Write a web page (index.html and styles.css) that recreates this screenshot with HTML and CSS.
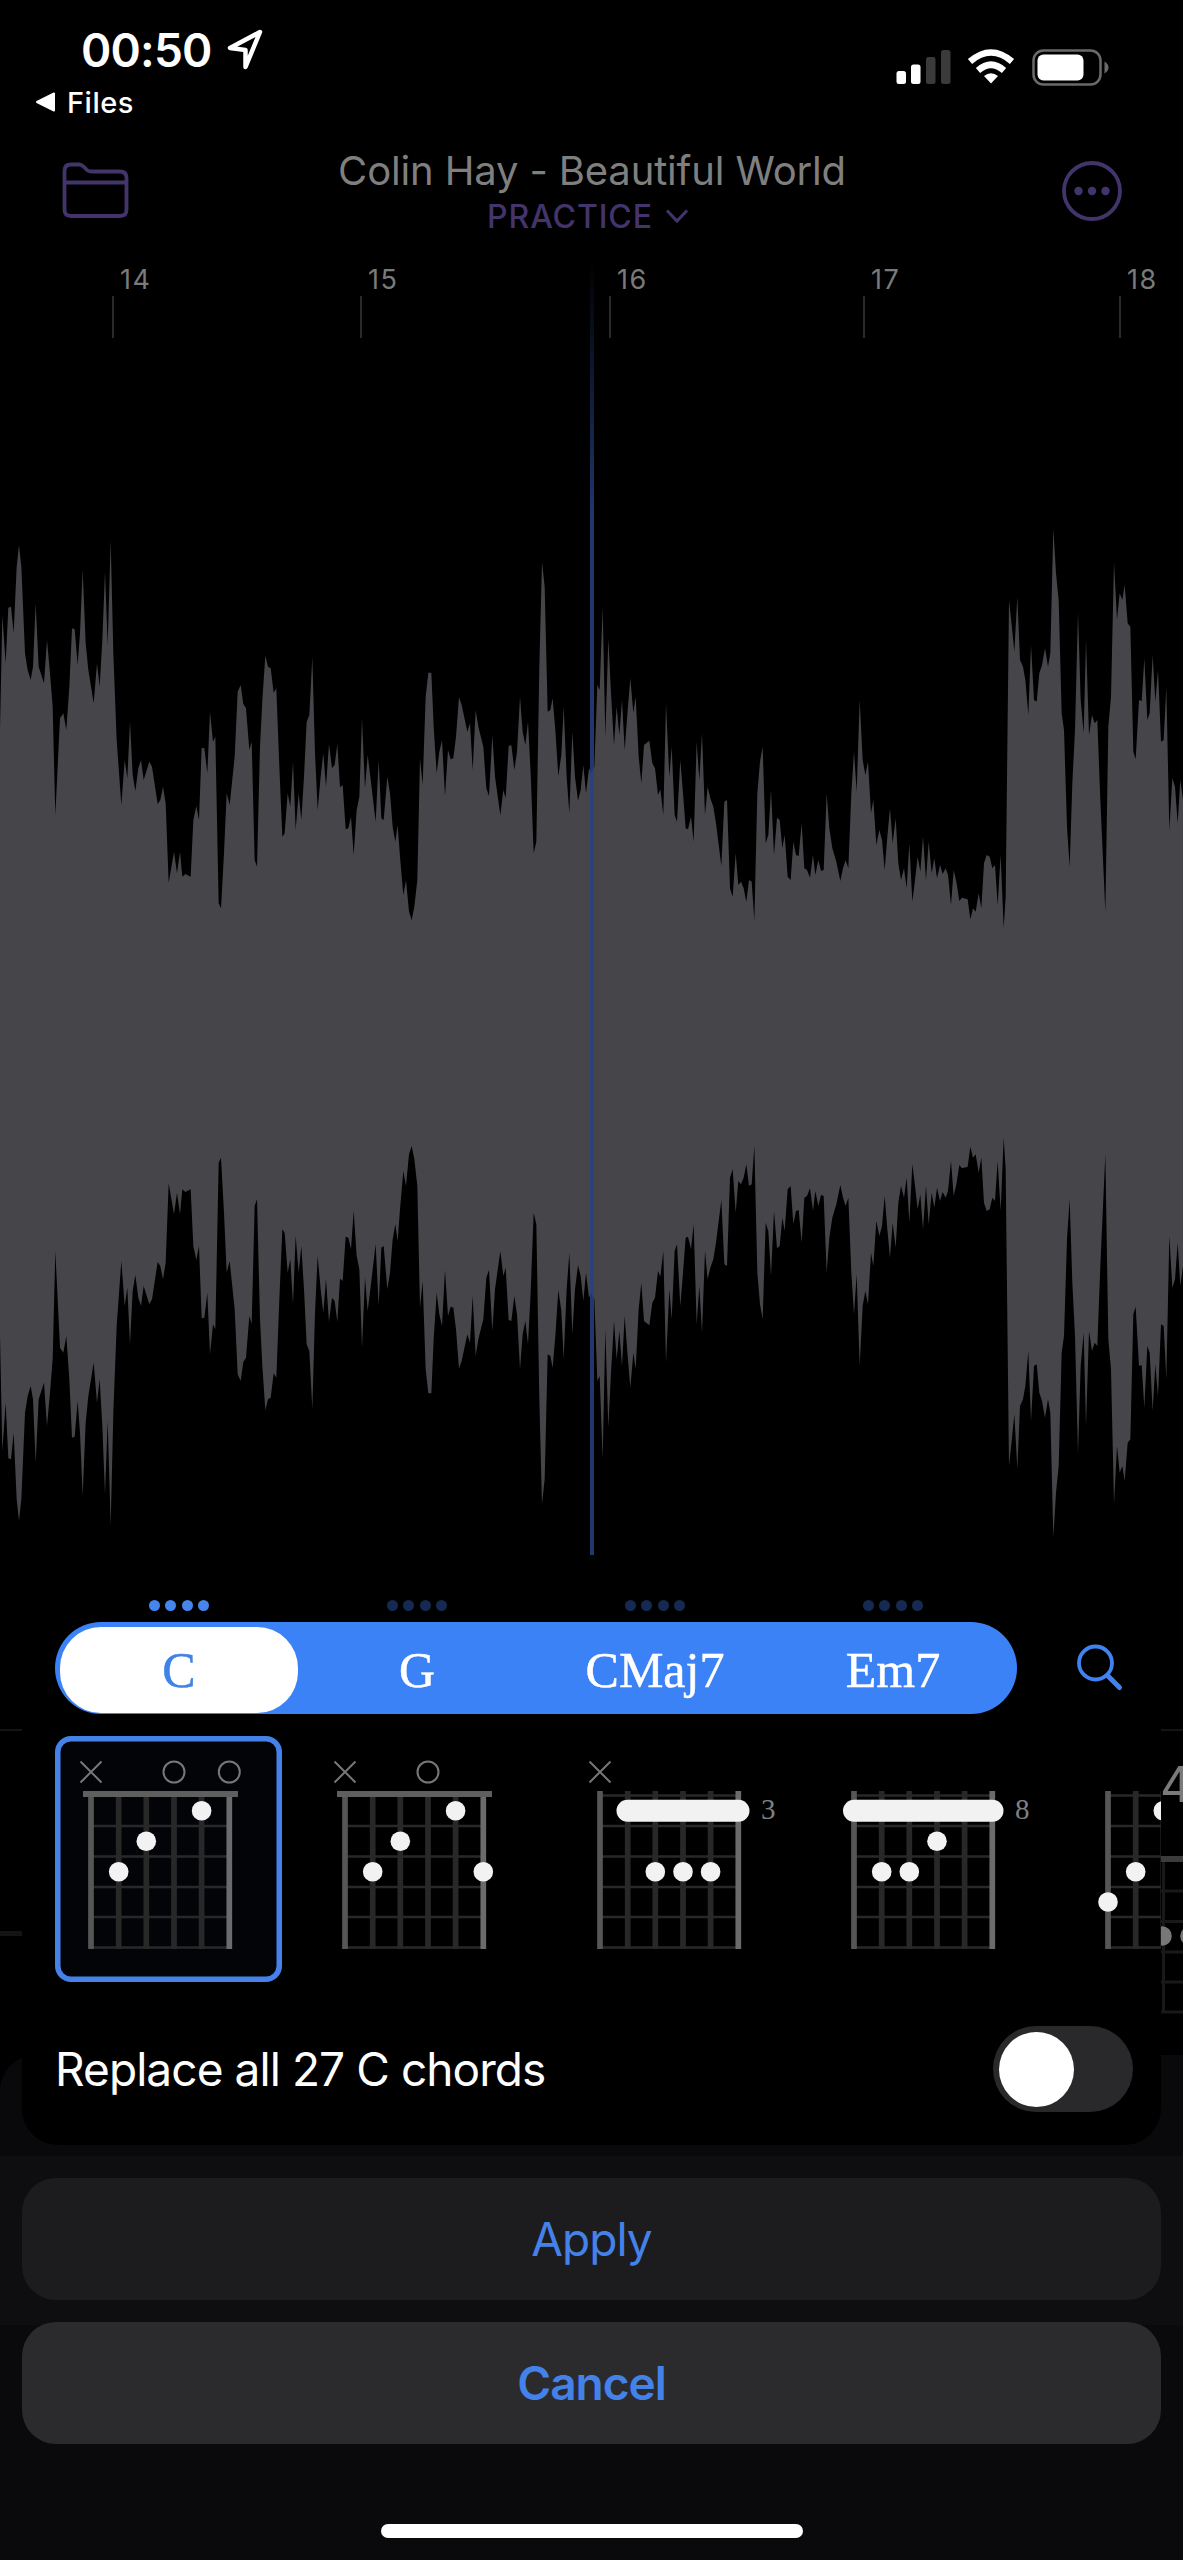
FILE: index.html
```html
<!DOCTYPE html>
<html lang="en">
<head>
<meta charset="utf-8">
<title>Replace chord</title>
<link rel="stylesheet" href="styles.css">
</head>
<body>
<main class="screen">
  <header class="status">
    <div class="status-left">
      <div class="clock"><span class="time">00:50</span>
        <svg class="location" width="40" height="44" viewBox="0 0 40 44"><path d="M34 4 4 20 19.500 22 19.500 39Z" fill="none" stroke="#fff" stroke-width="4.500" stroke-linejoin="round"/></svg>
      </div>
      <div class="back"><svg width="22" height="20" viewBox="0 0 22 20"><path d="M2 10 19 1.500V18.500Z" fill="#fff" stroke="#fff" stroke-width="2" stroke-linejoin="round"/></svg><span>Files</span></div>
    </div>
    <svg class="indicators" width="216" height="40" viewBox="0 0 216 40">
      <g fill="#fff"><rect x="0.500" y="23" width="9.500" height="13" rx="2.500"/><rect x="15" y="16.500" width="9.500" height="19.500" rx="2.500"/></g>
      <g fill="#3a3a3a"><rect x="30" y="9" width="9.500" height="27" rx="2.500"/><rect x="45" y="2" width="9.500" height="34" rx="2.500"/></g>
      <path d="M95 35.500 88 28Q95 22.500 102 28Z" fill="#fff"/>
      <path d="M82 22.500Q95 11 108 22.500" fill="none" stroke="#fff" stroke-width="6.500"/>
      <path d="M74 13.500Q95 -4.500 116 13.500" fill="none" stroke="#fff" stroke-width="6.500"/>
      <rect x="137.500" y="2.500" width="67" height="34" rx="10" fill="none" stroke="#6a6a6a" stroke-width="2.500"/>
      <rect x="141.500" y="6.500" width="46" height="26" rx="6" fill="#fff"/>
      <path d="M208.500 13.500q4 2.500 4 6t-4 6Z" fill="#6a6a6a"/>
    </svg>
  </header>

  <nav class="toolbar">
    <svg class="folder" width="68" height="58" viewBox="0 0 68 58"><path d="M2.500 13V9Q2.500 2.500 9 2.500H17Q19.500 2.500 21.500 4.500L25 8Q26.500 9.500 29 9.500H58Q64.500 9.500 64.500 16V47.500Q64.500 54 58 54H9Q2.500 54 2.500 47.500ZM2.500 20.500H64.500" fill="none" stroke="#43356b" stroke-width="3.800"/></svg>
    <div class="titles">
      <h1 class="song">Colin Hay - Beautiful World</h1>
      <div class="mode"><span>PRACTICE</span><svg width="24" height="16" viewBox="0 0 24 16"><path d="M2 2.500 12 13 22 2.500" fill="none" stroke="#43356b" stroke-width="3"/></svg></div>
    </div>
    <svg class="more" width="60" height="60" viewBox="0 0 60 60"><circle cx="30" cy="30" r="28" fill="none" stroke="#43356b" stroke-width="3.800"/><g fill="#43356b"><circle cx="16.500" cy="30" r="4.200"/><circle cx="30" cy="30" r="4.200"/><circle cx="43.500" cy="30" r="4.200"/></g></svg>
  </nav>

  <section class="timeline">
    <div class="ruler">
      <div class="bar">14</div><div class="bar">15</div><div class="bar">16</div><div class="bar">17</div><div class="bar">18</div>
    </div>
    <svg class="wave" width="1183" height="1066" viewBox="0 0 3549 3198">
      <g id="half" fill="#464549">
        <polygon points="0,1599 0,690 7,345 17,490 25,323 33,320 41,400 50,200 57,135 64,200 75,460 83,510 92,540 99,500 107,310 116,500 132,550 141,420 150,520 158,620 166,945 180,655 190,640 199,690 208,560 216,385 224,388 233,495 240,400 248,210 257,430 265,510 281,610 291,490 299,560 307,420 315,215 323,435 332,120 340,460 350,720 364,915 374,780 382,835 390,665 398,825 406,873 415,805 423,780 431,840 448,785 456,800 473,912 481,900 489,860 497,910 506,1148 522,1055 531,1120 540,1055 547,1130 556,1122 572,1130 580,960 589,918 597,960 605,743 613,745 622,820 630,635 639,725 646,710 656,1210 663,1225 672,1060 680,880 689,915 704,770 713,575 722,555 730,612 738,625 748,750 755,725 764,1080 771,1100 780,740 787,600 796,467 804,500 812,505 821,578 829,565 838,800 847,1010 854,1000 863,880 871,920 879,785 887,990 896,880 904,960 912,830 920,665 928,645 937,470 945,760 953,930 962,830 970,760 978,860 987,732 996,805 1004,795 1012,732 1020,862 1028,855 1037,988 1045,985 1053,950 1061,1065 1070,930 1078,890 1086,655 1095,865 1103,765 1111,830 1127,965 1136,780 1144,955 1151,960 1162,830 1170,880 1178,980 1186,1025 1193,975 1200,1070 1200,1599"/>
        <polygon transform="translate(1200)" points="0,1599 0,1070 10,1185 18,1140 27,1235 35,1260 43,1220 52,1140 60,775 68,855 77,590 85,518 94,518 101,680 110,820 118,755 126,720 135,888 144,750 152,778 160,775 168,710 177,592 185,615 202,695 210,670 218,810 227,630 235,680 250,740 259,865 267,888 277,705 285,830 301,945 310,870 317,895 326,738 334,735 343,810 351,755 360,590 368,695 376,735 384,665 392,820 401,1060 409,1025 418,500 426,185 434,260 443,635 451,630 458,595 466,690 475,828 484,765 491,620 500,830 508,940 517,695 525,830 534,902 542,870 550,795 558,880 567,805 574,820 583,800 592,555 599,570 608,320 616,710 625,415 633,580 642,735 650,620 658,705 666,600 674,750 683,630 691,535 700,640 707,590 716,770 724,850 732,735 748,722 757,790 765,805 774,885 781,868 790,945 798,610 808,830 815,740 824,945 831,965 841,780 849,880 857,985 864,988 873,950 881,1025 890,725 898,840 906,700 915,945 923,860 931,895 940,920 948,970 964,1098 973,905 981,900 990,1165 998,1190 1007,1060 1015,1155 1023,1145 1031,1165 1039,1205 1047,1140 1055,1145 1063,1260 1072,880 1080,785 1088,740 1097,1030 1105,1005 1113,870 1122,1065 1131,953 1139,960 1147,1045 1154,1005 1163,1130 1172,1140 1172,1599"/>
        <polygon transform="translate(2349)" points="18,1599 18,1136 23,1140 31,1025 39,1065 47,1068 56,970 64,1105 72,1110 81,1133 90,1065 97,1125 106,1080 114,1113 122,1110 131,880 139,985 148,1045 160,1085 172,1143 180,1105 188,1080 196,1105 205,880 213,755 221,875 230,600 239,780 247,825 255,785 264,940 271,900 280,1035 289,990 297,1020 305,1110 313,1010 321,925 329,1030 338,955 346,1090 354,1140 363,1105 371,1165 379,1030 388,1205 396,1140 404,1070 412,1115 420,1010 429,1140 437,1025 446,1120 454,1075 462,1135 471,1095 479,1122 488,1105 495,1125 504,1215 512,1110 520,1145 529,1203 537,1193 554,1198 562,1258 570,1225 578,1235 587,1180 595,1225 603,1090 611,1065 620,1070 628,1105 636,1095 644,1215 653,1065 662,1285 668,1190 678,300 686,375 694,455 703,290 711,480 720,500 727,540 736,645 744,435 753,600 761,605 769,520 777,495 786,445 795,500 802,460 811,85 819,220 827,300 836,640 843,690 852,980 860,1100 868,850 876,690 885,335 893,600 902,700 909,420 918,705 927,645 935,670 943,660 952,900 967,1235 976,680 984,590 993,185 1002,360 1010,280 1018,300 1025,255 1034,370 1042,380 1051,755 1058,778 1068,600 1076,603 1084,475 1093,660 1100,640 1109,465 1117,605 1125,510 1134,725 1142,720 1150,560 1159,990 1168,835 1176,860 1184,970 1192,840 1200,900 1200,1599"/>
      </g>
      <use href="#half" transform="matrix(1 0 0 -1 0 3198)"/>
    </svg>
    <div class="playhead"></div>
  </section>

  <section class="track">
    <svg width="1183" height="330" viewBox="0 0 1183 330">
      <path d="M0 2H1183" stroke="#141414" stroke-width="2"/>
      <path d="M0 205.500H22" stroke="#141414" stroke-width="5"/>
      <path d="M1161 131H1183" stroke="#3c3c3c" stroke-width="6"/>
      <path d="M1163.500 134V284M1161 163H1183M1161 193.500H1183M1161 224H1183M1161 254H1183M1161 284H1183" fill="none" stroke="#191919" stroke-width="3"/>
      <g fill="#777"><circle cx="1162" cy="208" r="9.800"/><circle cx="1190" cy="208" r="9.800"/></g>
      <text class="track-label" x="1160" y="74">4</text>
    </svg>
  </section>
  <section class="lower"><div class="lower-panel"></div><div class="lower-controls"></div></section>

  <section class="sheet">
    <div class="picker">
      <div class="choices">
        <div class="beats">
          <div class="beat-group current"><i></i><i></i><i></i><i></i></div>
          <div class="beat-group"><i></i><i></i><i></i><i></i></div>
          <div class="beat-group"><i></i><i></i><i></i><i></i></div>
          <div class="beat-group"><i></i><i></i><i></i><i></i></div>
        </div>
        <div class="segments">
          <div class="segment selected">C</div><div class="segment">G</div><div class="segment">CMaj7</div><div class="segment">Em7</div>
        </div>
      </div>
      <svg class="search" width="48" height="48" viewBox="0 0 48 48"><path d="M31.500 31.500 43.500 43.500" stroke="#3f82f0" stroke-width="5" stroke-linecap="round"/><circle cx="19.500" cy="19" r="16.500" fill="none" stroke="#3f82f0" stroke-width="3.800"/></svg>

      <div class="chords">
        <svg class="chord chosen" viewBox="0 0 227 246">
          <defs>
            <g id="grid" fill="none">
              <path d="M36 90H174M36 120.500H174M36 151H174M36 181H174M36 211.500H174" stroke="#282828" stroke-width="2.600"/>
              <path d="M63.700 55V213M91.300 55V213M119 55V213M146.600 55V213" stroke="#282828" stroke-width="5.700"/>
              <path d="M36 55V213" stroke="#565656" stroke-width="5.700"/><path d="M174.300 55V213" stroke="#6b6b6b" stroke-width="5.700"/>
            </g>
            <path id="nut" d="M28 58H183" stroke="#5f5f5f" stroke-width="6"/>
            <path id="top" d="M36 59.500H174" stroke="#282828" stroke-width="2.600"/>
            <path id="mute" d="M25.500 25.500 46.500 46.500M46.500 25.500 25.500 46.500" stroke="#777" stroke-width="2"/>
            <circle id="open" r="10.500" cy="36" fill="none" stroke="#777" stroke-width="2"/>
            <circle id="dot" r="9.800" fill="#f2f2f2"/>
          </defs>
          <use href="#grid"/><use href="#nut"/><use href="#mute"/><use href="#open" x="119"/><use href="#open" x="174.300"/>
          <use href="#dot" x="146.600" y="74.700"/><use href="#dot" x="91.300" y="105.300"/><use href="#dot" x="63.700" y="135.700"/>
        </svg>
        <svg class="chord" viewBox="0 0 227 246">
          <use href="#grid"/><use href="#nut"/><use href="#mute"/><use href="#open" x="119"/>
          <use href="#dot" x="146.600" y="74.700"/><use href="#dot" x="91.300" y="105.300"/><use href="#dot" x="63.700" y="135.700"/><use href="#dot" x="174.300" y="135.700"/>
        </svg>
        <svg class="chord" viewBox="0 0 227 246">
          <use href="#top"/><use href="#grid"/><use href="#mute"/><rect x="52.500" y="63.700" width="133" height="22" rx="11" fill="#f2f2f2"/>
          <use href="#dot" x="91.300" y="135.700"/><use href="#dot" x="119" y="135.700"/><use href="#dot" x="146.600" y="135.700"/>
          <text class="fret" x="197" y="82.500">3</text>
        </svg>
        <svg class="chord" viewBox="0 0 227 246">
          <use href="#top"/><use href="#grid"/><rect x="25" y="63.700" width="160.500" height="22" rx="11" fill="#f2f2f2"/>
          <use href="#dot" x="119" y="105.300"/><use href="#dot" x="63.700" y="135.700"/><use href="#dot" x="91.300" y="135.700"/>
          <text class="fret" x="197" y="82.500">8</text>
        </svg>
        <svg class="chord" viewBox="0 0 227 246">
          <use href="#top"/><use href="#grid"/>
          <use href="#dot" x="91.300" y="74.700"/><use href="#dot" x="63.700" y="135.700"/><use href="#dot" x="36" y="166"/>
        </svg>
      </div>

      <div class="replace"><span class="replace-label">Replace all 27 C chords</span><div class="toggle"><div class="knob"></div></div></div>
    </div>
    <button class="action apply"><span>Apply</span></button>
    <button class="action cancel"><span>Cancel</span></button>
    <div class="home"></div>
  </section>
</main>
</body>
</html>
```

FILE: styles.css
```css
* { box-sizing: border-box; }
body { margin: 0; background: #000; font-family: Inter, "Liberation Sans", sans-serif; }
.screen { position: relative; width: 1183px; height: 2560px; overflow: hidden; background: #000; color: #fff; display: flex; flex-direction: column; }
svg { display: block; flex: none; }

.status { height: 130px; display: flex; justify-content: space-between; padding: 28px 71px 0 35px; }
.clock { display: flex; height: 44px; align-items: center; gap: 12px; padding-left: 46px; }
.time { width: 133px; font-size: 46px; font-weight: 600; line-height: 44px; letter-spacing: -.8px; }
.back { display: flex; align-items: center; height: 36px; margin-top: 12px; gap: 10px; font-size: 29px; font-weight: 500; letter-spacing: .5px; }
.indicators { margin-top: 20px; }

.toolbar { height: 130px; display: flex; justify-content: space-between; padding: 31px 61px 0 62px; }
.folder { margin-top: 1px; }
.titles { height: 90px; margin: -15px 8px 0 0; display: flex; flex-direction: column; align-items: center; }
.song { margin: 0; font-size: 40px; font-weight: 400; line-height: 50px; letter-spacing: -.15px; color: #7f7f7f; white-space: nowrap; }
.mode { display: flex; align-items: center; gap: 12px; height: 40px; margin-right: 8px; font-size: 32px; font-weight: 500; letter-spacing: .9px; color: #43356b; }

.timeline { position: relative; height: 1468px; }
.ruler { display: grid; grid-template-columns: 248px 249px 254px 256px 64px; padding-left: 112px; height: 240px; }
.bar { height: 78px; padding: 5px 0 0 8px; font-size: 27px; line-height: 30px; letter-spacing: 1.5px; color: #7a7a7a; background: linear-gradient(#2a2a2a, #2a2a2a) 0 36px / 2px 42px no-repeat; }
.wave { width: 1183px; height: 1066px; }
.playhead { position: absolute; left: 590px; top: 0; width: 4px; height: 1295px; background: linear-gradient(rgba(38, 66, 130, 0), rgba(38, 66, 130, .85) 260px); }

.track { height: 327px; }
.track-label { font: 400 49px Inter, sans-serif; fill: #7a7a7a; }
.lower { flex: 1; display: flex; flex-direction: column; background: linear-gradient(#000 101px, #0a0a0c 101px); }
.lower-panel { height: 101px; background: #09090c; border-top-left-radius: 36px; }
.lower-controls { height: 169px; background: #0e0e10; }

.sheet { position: absolute; left: 22px; top: 1590px; width: 1139px; height: 970px; display: flex; flex-direction: column; align-items: center; }
.picker { width: 1139px; height: 555px; background: #000; border-radius: 0 0 36px 36px; overflow: hidden; display: grid; grid-template-columns: 962px 1fr; grid-template-rows: 124px 268px 1fr; padding-left: 33px; }
.beats { display: grid; grid-template-columns: repeat(4, 238px); padding: 10px 5px 0; height: 32px; }
.beat-group { display: flex; justify-content: center; gap: 5.600px; }
.beat-group i { width: 11px; height: 11px; border-radius: 50%; background: #152a52; }
.current i { background: #4684ee; }
.segments { height: 92px; border-radius: 46px; background: #3c82f7; padding: 5px; display: grid; grid-template-columns: repeat(4, 238px); }
.segment { border-radius: 41px; text-align: center; font: 400 50px/86px "Liberation Serif", serif; -webkit-text-stroke: .5px currentColor; }
.selected { background: #fff; color: #3f82e8; }
.search { margin: 54px 0 0 59px; }
.chords { grid-column: 1 / 3; margin-top: 22px; height: 246px; display: flex; gap: 27.300px; }
.chord { width: 227px; height: 246px; overflow: visible; border-radius: 16px; }
.chosen { background: #020408; box-shadow: inset 0 0 0 5.500px #4482ea; }
.fret { font: 400 29px "Liberation Serif", serif; fill: #808080; }
.replace { grid-column: 1 / 3; display: flex; justify-content: space-between; align-items: center; height: 86px; margin-top: 44px; padding: 0 28px 0 0; }
.replace-label { font-size: 46px; line-height: 60px; letter-spacing: -.92px; }
.toggle { width: 140px; height: 86px; padding: 5.500px; border-radius: 43px; background: #29292c; }
.knob { width: 75px; height: 75px; border-radius: 50%; background: #fff; }
.action { width: 100%; height: 122px; margin: 33px 0 0; padding: 0; border: 0; border-radius: 34px; background: #1c1c1e; color: #4482ea; font: 400 46px/122px Inter, sans-serif; letter-spacing: -1px; }
.cancel { margin-top: 22px; background: #2b2b2d; font-weight: 600; }
.home { width: 422px; height: 14px; margin-top: 80px; border-radius: 7px; background: #fff; }
```
